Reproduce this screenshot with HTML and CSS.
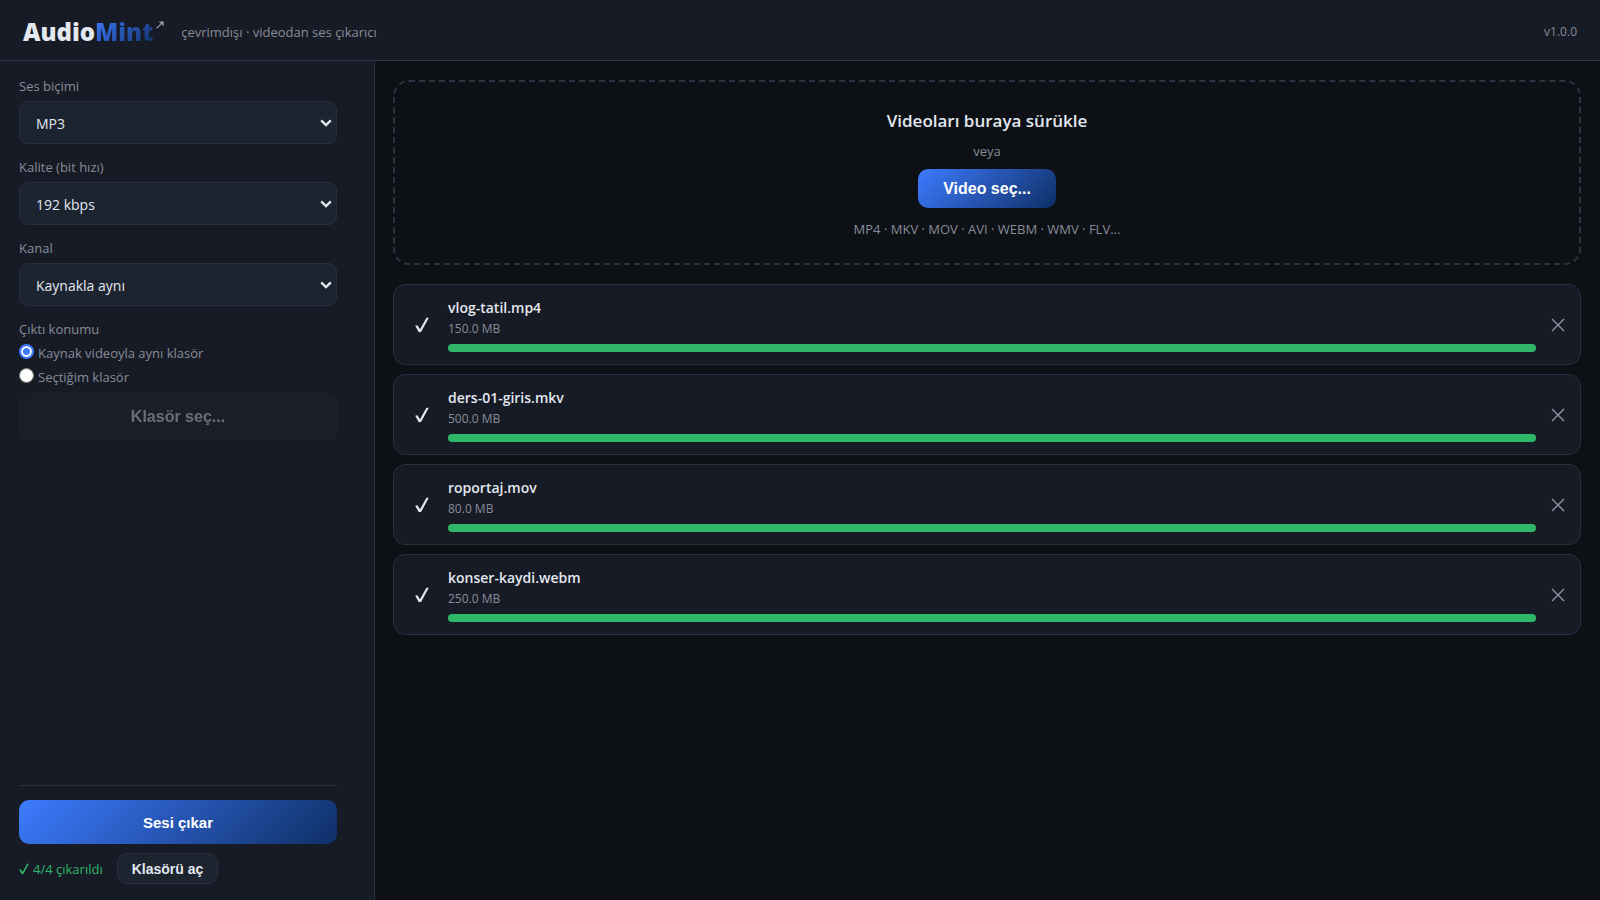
FILE: index.html
```html
<!DOCTYPE html>
<html lang="tr">
<head>
    <meta charset="UTF-8">
    <meta name="viewport" content="width=device-width, initial-scale=1">
    <title>AudioMint</title>
    <link rel="stylesheet" href="styles.css">
</head>
<body>
    <svg width="0" height="0" class="symbols" aria-hidden="true">
        <symbol id="check" viewBox="0 0 14 16">
            <path d="M0.2 8.8L2.4 8.2L5 12.2L11.4 0.8L13.8 0.8L6.2 14.8L3.8 15.2Z"/>
        </symbol>
        <symbol id="cross" viewBox="0 0 14 14">
            <path d="M1 1L13 13M13 1L1 13"/>
        </symbol>
        <symbol id="chevron" viewBox="0 0 12 8">
            <path d="M1.2 1.4L6 6L10.8 1.4"/>
        </symbol>
    </svg>

    <header class="topbar">
        <a class="logo" href="#">
            <span class="logo-name">Audio<span class="logo-accent">Mint</span></span>
            <svg class="logo-arrow" viewBox="0 0 8 8" aria-hidden="true"><path class="shaft" d="M0.6 7.4L5.6 2.4"/><path class="head" d="M2.8 0.4H7.6V5.2Z"/></svg>
        </a>
        <span class="tagline">çevrimdışı · videodan ses çıkarıcı</span>
        <span class="version">v1.0.0</span>
    </header>

    <div class="layout">
        <aside class="sidebar">
            <div class="field">
                <label for="format">Ses biçimi</label>
                <div class="select">
                    <select id="format"><option>MP3</option><option>WAV</option><option>FLAC</option></select>
                    <svg class="chevron"><use href="#chevron"/></svg>
                </div>
            </div>
            <div class="field">
                <label for="quality">Kalite (bit hızı)</label>
                <div class="select">
                    <select id="quality"><option>192 kbps</option><option>256 kbps</option><option>320 kbps</option></select>
                    <svg class="chevron"><use href="#chevron"/></svg>
                </div>
            </div>
            <div class="field">
                <label for="channel">Kanal</label>
                <div class="select">
                    <select id="channel"><option>Kaynakla aynı</option><option>Stereo</option><option>Mono</option></select>
                    <svg class="chevron"><use href="#chevron"/></svg>
                </div>
            </div>
            <fieldset class="output">
                <legend>Çıktı konumu</legend>
                <div class="radio">
                    <input type="radio" name="output" id="same" checked>
                    <label for="same">Kaynak videoyla aynı klasör</label>
                </div>
                <div class="radio">
                    <input type="radio" name="output" id="custom">
                    <label for="custom">Seçtiğim klasör</label>
                </div>
                <button type="button" class="btn btn-folder" disabled>Klasör seç...</button>
            </fieldset>

            <div class="actions">
                <button type="button" class="btn btn-primary btn-extract">Sesi çıkar</button>
                <div class="status">
                    <svg class="status-check"><use href="#check"/></svg>
                    <span class="status-text">4/4 çıkarıldı</span>
                    <button type="button" class="btn btn-open">Klasörü aç</button>
                </div>
            </div>
        </aside>

        <main class="content">
            <section class="dropzone">
                <h1>Videoları buraya sürükle</h1>
                <p class="or">veya</p>
                <button type="button" class="btn btn-primary btn-pick">Video seç...</button>
                <p class="formats">MP4 · MKV · MOV · AVI · WEBM · WMV · FLV...</p>
            </section>

            <ul class="files">
                <li class="file">
                    <svg class="file-check"><use href="#check"/></svg>
                    <div class="file-info">
                        <div class="file-name">vlog-tatil.mp4</div>
                        <div class="file-size">150.0 MB</div>
                        <div class="bar"><div class="bar-fill" style="width: 100%"></div></div>
                    </div>
                    <button type="button" class="remove" aria-label="Kaldır"><svg><use href="#cross"/></svg></button>
                </li>
                <li class="file">
                    <svg class="file-check"><use href="#check"/></svg>
                    <div class="file-info">
                        <div class="file-name">ders-01-giris.mkv</div>
                        <div class="file-size">500.0 MB</div>
                        <div class="bar"><div class="bar-fill" style="width: 100%"></div></div>
                    </div>
                    <button type="button" class="remove" aria-label="Kaldır"><svg><use href="#cross"/></svg></button>
                </li>
                <li class="file">
                    <svg class="file-check"><use href="#check"/></svg>
                    <div class="file-info">
                        <div class="file-name">roportaj.mov</div>
                        <div class="file-size">80.0 MB</div>
                        <div class="bar"><div class="bar-fill" style="width: 100%"></div></div>
                    </div>
                    <button type="button" class="remove" aria-label="Kaldır"><svg><use href="#cross"/></svg></button>
                </li>
                <li class="file">
                    <svg class="file-check"><use href="#check"/></svg>
                    <div class="file-info">
                        <div class="file-name">konser-kaydi.webm</div>
                        <div class="file-size">250.0 MB</div>
                        <div class="bar"><div class="bar-fill" style="width: 100%"></div></div>
                    </div>
                    <button type="button" class="remove" aria-label="Kaldır"><svg><use href="#cross"/></svg></button>
                </li>
            </ul>
        </main>
    </div>
</body>
</html>
```
FILE: styles.css
```css
:root{
    --bg: #0d1115;
    --panel: #171b25;
    --field: #1c2430;
    --line: #2a2e40;
    --text: #e3e8f0;
    --muted: #878c9a;
    --green: #2fb668;
    --grad: linear-gradient(135deg, #3d7bff, #0f2f66);
}
*{box-sizing: border-box;}
body{
    margin: 0;
    min-height: 100vh;
    display: flex;
    flex-direction: column;
    background-color: var(--bg);
    color: var(--text);
    font-family: "Open Sans", "Noto Sans", sans-serif;
    font-size: 13px;
    line-height: 20px;
}
.symbols{
    position: absolute;
}

/* header */
.topbar{
    display: flex;
    align-items: center;
    height: 61px;
    padding: 3px 23px 0;
    background-color: var(--panel);
    border-bottom: 1px solid #30344c;
}
.logo{
    display: flex;
    gap: 3px;
    color: var(--text);
    text-decoration: none;
}
.logo-name{
    font-size: 24px;
    font-weight: 800;
    line-height: 28px;
}
.logo-accent{
    background: linear-gradient(135deg, #3d7bff, #0f2f66);
    background-clip: text;
    -webkit-background-clip: text;
    color: transparent;
}
.logo-arrow{
    width: 8px;
    height: 8px;
    margin-top: 3px;
}
.logo-arrow .shaft{
    stroke: #9a9faa;
    stroke-width: 1.1;
}
.logo-arrow .head{
    fill: #9a9faa;
}
.tagline{
    margin-left: 17px;
    color: var(--muted);
    font-weight: 500;
}
.version{
    margin-left: auto;
    color: var(--muted);
    font-size: 12px;
}

/* sidebar */
.layout{
    flex: 1;
    display: flex;
}
.sidebar{
    display: flex;
    flex-direction: column;
    flex: 0 0 375px;
    padding: 15px 37px 16px 19px;
    background-color: var(--panel);
    border-right: 1px solid var(--line);
}
.field{
    margin-bottom: 13px;
}
.field label, .output legend{
    display: block;
    padding: 0;
    color: var(--muted);
    font-weight: 500;
}
.select{
    position: relative;
    margin-top: 5px;
}
.select select{
    display: block;
    width: 100%;
    height: 43px;
    padding: 2px 16px 0;
    appearance: none;
    color: var(--text);
    background-color: var(--field);
    border: 1px solid var(--line);
    border-radius: 9px;
    font-family: inherit;
    font-size: 14px;
    font-weight: 500;
}
.chevron{
    position: absolute;
    top: 18px;
    right: 5px;
    width: 12px;
    height: 8px;
    fill: none;
    stroke: var(--text);
    stroke-width: 2.4;
    pointer-events: none;
}
.output{
    margin: 0;
    padding: 0;
    border: none;
    min-width: 0;
}
.output legend{
    margin-bottom: 2px;
}
.radio{
    display: flex;
    gap: 4px;
    height: 24px;
    align-items: center;
    color: var(--muted);
    font-weight: 500;
}
.radio input{
    appearance: none;
    width: 15px;
    height: 15px;
    margin: 0 0 4px;
    border-radius: 50%;
    background-color: white;
    border: 1px solid #767676;
}
.radio input:checked{
    border: 2px solid #3d7bff;
    background-color: #3d7bff;
    box-shadow: inset 0 0 0 2px white;
}

.btn{
    font-family: "Liberation Sans", Arial, sans-serif;
    font-size: 16px;
    font-weight: bold;
    color: var(--text);
    background-color: var(--field);
    border: 1px solid var(--line);
    border-radius: 10px;
}
.btn-primary{
    color: white;
    background: var(--grad);
    border: none;
}
.btn-folder{
    display: block;
    width: 100%;
    height: 46px;
    margin-top: 5px;
    opacity: 0.4;
}
.actions{
    margin-top: auto;
    padding-top: 14px;
    border-top: 1px solid var(--line);
}
.btn-extract{
    display: block;
    width: 100%;
    height: 44px;
    font-size: 15px;
}
.status{
    display: flex;
    align-items: center;
    margin-top: 9px;
    color: var(--green);
}
.status-check{
    width: 10px;
    height: 12px;
    margin-right: 4px;
    fill: var(--green);
}
.btn-open{
    height: 31px;
    margin-left: 14px;
    padding: 0 14px;
    font-size: 14px;
}

/* main */
.content{
    flex: 1;
    min-width: 0;
    padding: 19px 19px 19px 18px;
}
.dropzone{
    display: flex;
    flex-direction: column;
    align-items: center;
    padding: 26px 20px 24px;
    border: 2px dashed #2e3242;
    border-radius: 16px;
}
.dropzone h1{
    margin: 0;
    font-size: 17px;
    font-weight: 600;
    line-height: 26px;
}
.dropzone p{
    margin: 0;
    color: var(--muted);
}
.or{
    padding: 7px 0 8px;
}
.btn-pick{
    height: 39px;
    padding: 0 25px;
}
.dropzone .formats{
    margin-top: 11px;
}
.files{
    display: flex;
    flex-direction: column;
    gap: 9px;
    margin: 19px 0 0;
    padding: 0;
    list-style: none;
}
.file{
    display: flex;
    align-items: center;
    height: 81px;
    padding: 1px 15px 0 21px;
    background-color: var(--panel);
    border: 1px solid var(--line);
    border-radius: 12px;
}
.file-check{
    width: 14px;
    height: 16px;
    margin-right: 19px;
    fill: var(--text);
}
.file-info{
    flex: 1;
    min-width: 0;
}
.file-name{
    font-size: 14px;
    font-weight: 600;
}
.file-size{
    color: var(--muted);
    font-size: 12px;
    line-height: 22px;
}
.bar{
    height: 8px;
    margin-top: 4px;
    border-radius: 4px;
    background-color: var(--field);
}
.bar-fill{
    height: 100%;
    border-radius: 4px;
    background-color: var(--green);
}
.remove{
    display: flex;
    margin-left: 15px;
    padding: 0;
    background: none;
    border: none;
}
.remove svg{
    width: 14px;
    height: 14px;
    fill: none;
    stroke: #8f95a5;
    stroke-width: 1.4;
}
```
